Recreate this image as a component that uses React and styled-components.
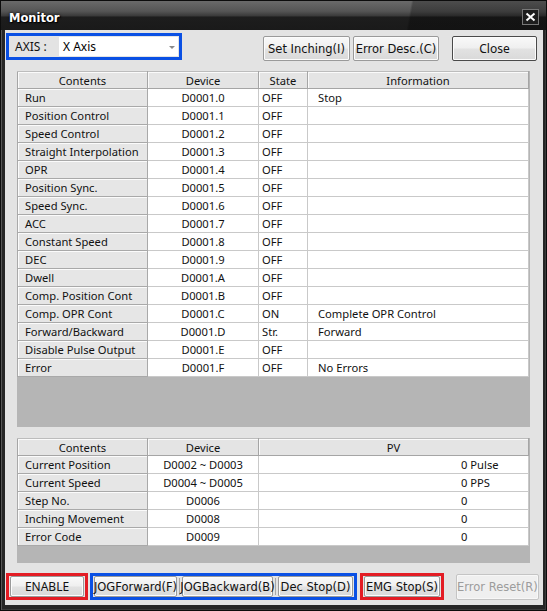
import React from "react";
import styled, { createGlobalStyle } from "styled-components";

const Global = createGlobalStyle`
  html, body { margin: 0; padding: 0; background: #1b1b1b; }
  * { box-sizing: border-box; }
`;

const Window = styled.div`
  width: 547px;
  height: 611px;
  display: flex;
  flex-direction: column;
  background: #262626;
  border: 1px solid #0c0c0c;
  box-shadow: inset 1px 1px 0 #555, inset -1px -1px 0 #3a3a3a;
`;

const TitleBar = styled.div`
  height: 29px;
  flex: none;
  display: flex;
  align-items: center;
  justify-content: space-between;
  padding: 0 7px 0 8px;
  background:
    linear-gradient(100deg, transparent 74.6%, rgba(0, 0, 0, 0.28) 75%),
    linear-gradient(#6a6a6a 0%, #555 35%, #3c3c3c 50%, #1d1d1d 56%, #1a1a1a 100%);
`;

const Title = styled.span`
  font-family: "DejaVu Sans", sans-serif;
  font-weight: bold;
  font-size: 11.5px;
  color: #fff;
  text-shadow: 0 0 3px #000, 1px 1px 1px #000;
  margin-top: 5px;
`;

const CloseBox = styled.div`
  width: 17px;
  height: 16px;
  margin-top: 3px;
  border: 1px solid #777;
  background: #1e1e1e;
  display: flex;
  align-items: center;
  justify-content: center;
`;

const Client = styled.div`
  flex: 1;
  margin: 0 3px 5px 4px;
  background: #e3e3e3;
  display: flex;
  flex-direction: column;
  padding: 3px 6px 0 1px;
`;

const TopRow = styled.div`
  display: flex;
  align-items: flex-start;
  height: 38px;
`;

const Mark = styled.div`
  border: 3px solid ${(p) => (p.$tone === "red" ? "#e31c24" : "#0a50e4")};
  display: flex;
  align-items: center;
  height: ${(p) => p.$h || 27}px;
  padding: 0 1px;
  gap: ${(p) => p.$gap || 0}px;
`;

const AxisLabel = styled.span`
  font-family: "Noto Sans", sans-serif;
  font-size: 12px;
  color: #111;
  width: 49px;
  padding-left: 5px;
`;

const Combo = styled.div`
  width: 119px;
  height: 19px;
  background: #fff;
  display: flex;
  align-items: center;
  justify-content: space-between;
  padding: 0 3px 0 4px;
  font-family: "Noto Sans", sans-serif;
  font-size: 12px;
  color: #000;
`;

const Arrow = styled.span`
  width: 0;
  height: 0;
  border-left: 3px solid transparent;
  border-right: 3px solid transparent;
  border-top: 3px solid #8a8a8a;
  margin-top: 2px;
`;

const Spacer = styled.div`
  flex: 1;
`;

const Button = styled.div`
  width: ${(p) => p.$w}px;
  height: ${(p) => p.$h || 25}px;
  margin-left: ${(p) => p.$ml || 0}px;
  margin-top: ${(p) => p.$mt || 0}px;
  display: flex;
  align-items: center;
  justify-content: center;
  font-family: ${(p) => (p.$sans ? '"Noto Sans", sans-serif' : '"DejaVu Sans", sans-serif')};
  font-size: ${(p) => (p.$sans ? 12 : 11.5)}px;
  white-space: nowrap;
  color: ${(p) => (p.$disabled ? "#9c9c9c" : "#111")};
  border: 1px solid ${(p) => (p.$disabled ? "#c4c4c4" : p.$def ? "#4a4a4a" : "#9a9a9a")};
  border-radius: 2px;
  background: ${(p) =>
    p.$disabled
      ? "#efefef"
      : "linear-gradient(#f9f9f9 0%, #efefef 48%, #e2e2e2 52%, #d9d9d9 100%)"};
  box-shadow: inset 0 0 0 1px ${(p) => (p.$disabled ? "#f7f7f7" : "#fcfcfc")};
`;

const Panel = styled.div`
  margin: ${(p) => p.$mt}px 7px 0 11px;
  height: ${(p) => p.$h}px;
  background: #b5b5b5;
  flex: none;
`;

const Table = styled.table`
  border-collapse: collapse;
  width: 511px;
  table-layout: fixed;
  font-family: "Noto Sans", sans-serif;
  font-size: 11.2px;
  color: #111;
  background: #fff;
`;

const Head = styled.th`
  height: 17px;
  padding: 0;
  font-weight: normal;
  text-align: center;
  background: #e4e4e4;
  border: 1px solid #a5a5a5;
  border-top-color: #bcbcbc;
  box-shadow: inset 1px 1px 0 #fafafa;
  line-height: 15px;
`;

const Name = styled.td`
  height: 18px;
  padding: 0 0 0 7px;
  background: #e6e6e6;
  border: 1px solid #a9a9a9;
  border-top: none;
  box-shadow: inset 1px 1px 0 #fbfbfb;
  white-space: nowrap;
  line-height: 16px;
`;

const Cell = styled.td`
  height: 18px;
  padding: 0 0 0 ${(p) => p.$pl || 0}px;
  text-align: ${(p) => p.$align || "left"};
  border-right: 1px solid #c9c9c9;
  border-bottom: 1px solid #c9c9c9;
  white-space: nowrap;
  line-height: 16px;
`;

const BottomRow = styled.div`
  display: flex;
  align-items: center;
  margin-top: 10px;
`;

const Divider = styled.span`
  width: 1px;
  align-self: stretch;
  margin: 2px 0;
  background: #a8a8a8;
`;

const bits = [
  ["Run", "D0001.0", "OFF", "Stop"],
  ["Position Control", "D0001.1", "OFF", ""],
  ["Speed Control", "D0001.2", "OFF", ""],
  ["Straight Interpolation", "D0001.3", "OFF", ""],
  ["OPR", "D0001.4", "OFF", ""],
  ["Position Sync.", "D0001.5", "OFF", ""],
  ["Speed Sync.", "D0001.6", "OFF", ""],
  ["ACC", "D0001.7", "OFF", ""],
  ["Constant Speed", "D0001.8", "OFF", ""],
  ["DEC", "D0001.9", "OFF", ""],
  ["Dwell", "D0001.A", "OFF", ""],
  ["Comp. Position Cont", "D0001.B", "OFF", ""],
  ["Comp. OPR Cont", "D0001.C", "ON", "Complete OPR Control"],
  ["Forward/Backward", "D0001.D", "Str.", "Forward"],
  ["Disable Pulse Output", "D0001.E", "OFF", ""],
  ["Error", "D0001.F", "OFF", "No Errors"],
];

const values = [
  ["Current Position", "D0002 ~ D0003", "0 Pulse"],
  ["Current Speed", "D0004 ~ D0005", "0 PPS"],
  ["Step No.", "D0006", "0"],
  ["Inching Movement", "D0008", "0"],
  ["Error Code", "D0009", "0"],
];

export default function App() {
  return (
    <>
      <Global />
      <Window>
        <TitleBar>
          <Title>Monitor</Title>
          <CloseBox>
            <svg width="11" height="10" viewBox="0 0 11 10">
              <path d="M1.5 1.5 L9.5 8.5 M9.5 1.5 L1.5 8.5" stroke="#fff" strokeWidth="2" />
            </svg>
          </CloseBox>
        </TitleBar>
        <Client>
          <TopRow>
            <Mark $h={27}>
              <AxisLabel>AXIS :</AxisLabel>
              <Combo>
                X Axis
                <Arrow />
              </Combo>
            </Mark>
            <Spacer />
            <Button $w={87} $mt={3}>Set Inching(I)</Button>
            <Button $w={86} $ml={3} $mt={3}>Error Desc.(C)</Button>
            <Button $w={85} $ml={13} $mt={3} $sans $def>Close</Button>
          </TopRow>

          <Panel $mt={0} $h={356}>
            <Table>
              <colgroup>
                <col style={{ width: 130 }} />
                <col style={{ width: 111 }} />
                <col style={{ width: 49 }} />
                <col style={{ width: 221 }} />
              </colgroup>
              <thead>
                <tr>
                  <Head>Contents</Head>
                  <Head>Device</Head>
                  <Head>State</Head>
                  <Head>Information</Head>
                </tr>
              </thead>
              <tbody>
                {bits.map(([name, dev, state, info]) => (
                  <tr key={dev}>
                    <Name>{name}</Name>
                    <Cell $align="center">{dev}</Cell>
                    <Cell $pl={3}>{state}</Cell>
                    <Cell $pl={10}>{info}</Cell>
                  </tr>
                ))}
              </tbody>
            </Table>
          </Panel>

          <Panel $mt={11} $h={125}>
            <Table>
              <colgroup>
                <col style={{ width: 130 }} />
                <col style={{ width: 111 }} />
                <col style={{ width: 270 }} />
              </colgroup>
              <thead>
                <tr>
                  <Head>Contents</Head>
                  <Head>Device</Head>
                  <Head>PV</Head>
                </tr>
              </thead>
              <tbody>
                {values.map(([name, dev, pv]) => (
                  <tr key={dev}>
                    <Name>{name}</Name>
                    <Cell $align="center">{dev}</Cell>
                    <Cell $pl={202}>{pv}</Cell>
                  </tr>
                ))}
              </tbody>
            </Table>
          </Panel>

          <BottomRow>
            <Mark $tone="red" $h={27}>
              <Button $w={74} $h={21} $sans>ENABLE</Button>
            </Mark>
            <Mark $h={27} style={{ marginLeft: 2 }} $gap={2}>
              <Button $w={83} $h={21}>JOGForward(F)</Button>
              <Divider />
              <Button $w={91} $h={21}>JOGBackward(B)</Button>
              <Divider />
              <Button $w={75} $h={21}>Dec Stop(D)</Button>
            </Mark>
            <Mark $tone="red" $h={27} style={{ marginLeft: 3 }}>
              <Button $w={76} $h={21}>EMG Stop(S)</Button>
            </Mark>
            <Button $w={84} $h={26} $ml={12} $disabled>Error Reset(R)</Button>
          </BottomRow>
        </Client>
      </Window>
    </>
  );
}
